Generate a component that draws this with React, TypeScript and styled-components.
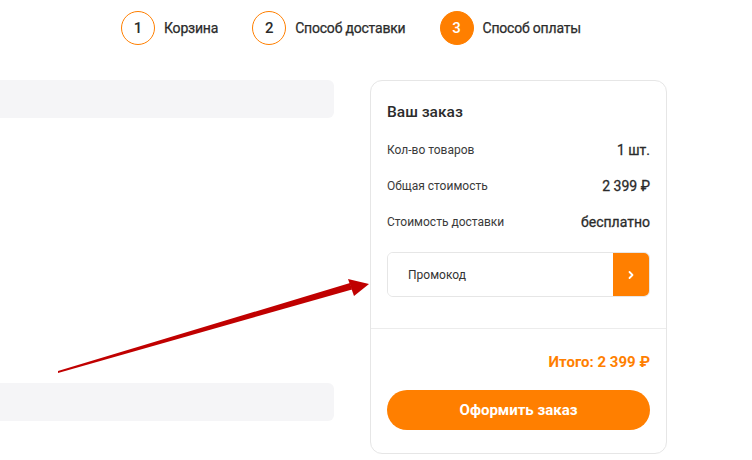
import React from 'react';
import styled, { createGlobalStyle } from 'styled-components';

const ORANGE = '#ff7f00';

const GlobalStyle = createGlobalStyle`
  html, body {
    margin: 0;
    padding: 0;
    background: #ffffff;
    font-family: Roboto, 'Noto Sans', Arial, sans-serif;
    color: #2b2b2b;
  }
`;

const steps = [
  { num: 1, label: 'Корзина', active: false },
  { num: 2, label: 'Способ доставки', active: false },
  { num: 3, label: 'Способ оплаты', active: true },
];

const summary = [
  { label: 'Кол-во товаров', value: '1 шт.' },
  { label: 'Общая стоимость', value: '2 399 ₽' },
  { label: 'Стоимость доставки', value: 'бесплатно' },
];

export default function App() {
  return (
    <>
      <GlobalStyle />
      <Page>
        <Steps>
          {steps.map((s) => (
            <Step key={s.num}>
              <StepCircle $active={s.active}>{s.num}</StepCircle>
              <StepLabel>{s.label}</StepLabel>
            </Step>
          ))}
        </Steps>

        <Content>
          <LeftColumn>
            <GrayBar />
            <GrayBar />
          </LeftColumn>

          <Card>
            <CardTop>
              <CardTitle>Ваш заказ</CardTitle>
              {summary.map((row) => (
                <SummaryRow key={row.label}>
                  <RowLabel>{row.label}</RowLabel>
                  <RowValue>{row.value}</RowValue>
                </SummaryRow>
              ))}
              <PromoBox>
                <PromoInput placeholder="Промокод" />
                <PromoButton>
                  <svg width="10" height="10" viewBox="0 0 10 10">
                    <path
                      d="M3.5 2 L6.5 5 L3.5 8"
                      fill="none"
                      stroke="#fff"
                      strokeWidth="1.8"
                      strokeLinecap="round"
                      strokeLinejoin="round"
                    />
                  </svg>
                </PromoButton>
              </PromoBox>
            </CardTop>
            <CardBottom>
              <Total>Итого: 2 399 ₽</Total>
              <OrderButton>Оформить заказ</OrderButton>
            </CardBottom>
          </Card>
        </Content>

        <Arrow width="752" height="460" viewBox="0 0 752 460">
          <polygon
            points="58,373 352,289.5 350,283 58,371"
            fill="#c00000"
          />
          <polygon points="369,284 348,279 354,296" fill="#c00000" />
        </Arrow>
      </Page>
    </>
  );
}

const Page = styled.div`
  position: relative;
  width: 752px;
  height: 460px;
  overflow: hidden;
`;

const Steps = styled.div`
  display: flex;
  align-items: center;
  padding: 11px 0 0 121px;
  height: 34px;
`;

const Step = styled.div`
  display: flex;
  align-items: center;
  gap: 9px;
  margin-right: 34px;
`;

const StepCircle = styled.div<{ $active: boolean }>`
  width: 34px;
  height: 34px;
  box-sizing: border-box;
  border-radius: 50%;
  border: 1px solid ${ORANGE};
  background: ${(p) => (p.$active ? ORANGE : '#fff')};
  color: ${(p) => (p.$active ? '#fff' : '#2b2b2b')};
  display: flex;
  align-items: center;
  justify-content: center;
  font-size: 15px;
  font-weight: 500;
`;

const StepLabel = styled.span`
  font-size: 14px;
  font-weight: 400;
  letter-spacing: -0.2px;
  color: #2b2b2b;
  -webkit-text-stroke: 0.25px #2b2b2b;
`;

const Content = styled.div`
  display: flex;
  gap: 36px;
  margin-top: 35px;
`;

const LeftColumn = styled.div`
  width: 334px;
  display: flex;
  flex-direction: column;
  gap: 265px;
`;

const GrayBar = styled.div`
  height: 38px;
  background: #f5f5f7;
  border-radius: 0 6px 6px 0;
`;

const Card = styled.div`
  width: 297px;
  height: 374px;
  box-sizing: border-box;
  border: 1px solid #e6e6e6;
  border-radius: 12px;
  display: flex;
  flex-direction: column;
`;

const CardTop = styled.div`
  padding: 21px 16px 31px;
  border-bottom: 1px solid #ececec;
`;

const CardTitle = styled.div`
  font-size: 15.5px;
  font-weight: 500;
  line-height: 20px;
  color: #2b2b2b;
  margin-bottom: 10px;
`;

const SummaryRow = styled.div`
  display: flex;
  justify-content: space-between;
  align-items: center;
  height: 36px;
`;

const RowLabel = styled.span`
  font-size: 12px;
  color: #3a3a3a;
`;

const RowValue = styled.span`
  font-size: 14px;
  font-weight: 400;
  color: #2b2b2b;
  -webkit-text-stroke: 0.3px #2b2b2b;
`;

const PromoBox = styled.div`
  display: flex;
  margin-top: 12px;
  height: 45px;
  box-sizing: border-box;
  border: 1px solid #e6e6e6;
  border-radius: 6px;
  overflow: hidden;
`;

const PromoInput = styled.input`
  flex: 1;
  border: none;
  outline: none;
  padding: 0 0 0 20px;
  font-family: inherit;
  font-size: 12px;
  background: #fff;

  &::placeholder {
    color: #333;
  }
`;

const PromoButton = styled.button`
  width: 36px;
  border: none;
  background: ${ORANGE};
  display: flex;
  align-items: center;
  justify-content: center;
  padding: 0;
`;

const CardBottom = styled.div`
  padding: 23px 16px 0;
  display: flex;
  flex-direction: column;
`;

const Total = styled.div`
  text-align: right;
  font-size: 15px;
  font-weight: 700;
  line-height: 20px;
  color: ${ORANGE};
`;

const OrderButton = styled.button`
  margin-top: 18px;
  height: 40px;
  border: none;
  border-radius: 20px;
  background: ${ORANGE};
  color: #fff;
  font-family: inherit;
  font-size: 15px;
  font-weight: 700;
`;

const Arrow = styled.svg`
  position: absolute;
  left: 0;
  top: 0;
  pointer-events: none;
`;
